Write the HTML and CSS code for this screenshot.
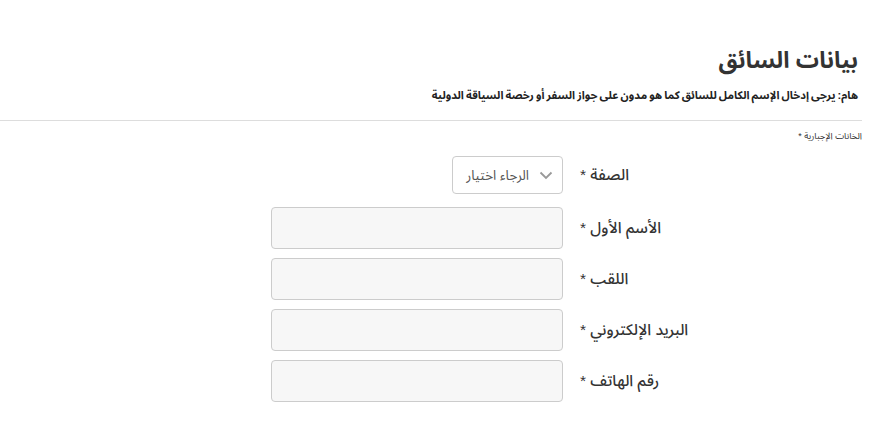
FILE: index.html
```html
<!DOCTYPE html>
<html lang="ar" dir="rtl">
<head>
<meta charset="utf-8">
<title>بيانات السائق</title>
<link rel="stylesheet" href="styles.css">
</head>
<body>
<div class="page">
  <div class="header">
    <h2 class="title">بيانات السائق</h2>
    <p class="subtitle">هام: يرجى إدخال الإسم الكامل للسائق كما هو مدون على جواز السفر أو رخصة السياقة الدولية</p>
  </div>
  <hr class="divider">
  <p class="required-note">الخانات الإجبارية *</p>
  <form class="form">
    <div class="row row-select">
      <label class="label">الصفة *</label>
      <div class="select">
        <svg class="chevron" width="14" height="9" viewBox="0 0 14 9"><path d="M1.5 1.5 L7 7 L12.5 1.5" fill="none" stroke="#999" stroke-width="1.8"/></svg>
        <span class="select-text">الرجاء اختيار</span>
      </div>
    </div>
    <div class="row">
      <label class="label">الأسم الأول *</label>
      <input class="input" type="text">
    </div>
    <div class="row">
      <label class="label">اللقب *</label>
      <input class="input" type="text">
    </div>
    <div class="row">
      <label class="label">البريد الإلكتروني *</label>
      <input class="input" type="text">
    </div>
    <div class="row">
      <label class="label">رقم الهاتف *</label>
      <input class="input" type="text">
    </div>
  </form>
</div>
</body>
</html>
```
FILE: styles.css
```css
html, body {
  margin: 0;
  padding: 0;
  background: #fff;
}
body {
  font-family: "Liberation Sans", "Noto Sans Arabic", sans-serif;
  color: #333;
}
.page {
  width: 862px;
  margin-right: 8px;
  padding-top: 1px;
}
.header {
  padding-right: 4px;
}
.title {
  margin: 44px 0 0 0;
  font-size: 23px;
  font-weight: bold;
  line-height: 30px;
  color: #333;
}
.subtitle {
  margin: 12px 0 0 0;
  font-size: 11.1px;
  word-spacing: -1px;
  font-weight: bold;
  line-height: 16px;
  color: #222;
}
.divider {
  border: 0;
  border-top: 1px solid #ddd;
  margin: 17px 0 0 0;
}
.required-note {
  margin: 9px 0 0 0;
  font-size: 9px;
  line-height: 12px;
  color: #333;
}
.form {
  margin-top: 14px;
  display: flex;
  flex-direction: column;
  gap: 9px;
}
.row {
  display: flex;
  align-items: center;
  gap: 17px;
}
.row-select {
  margin-bottom: 4px;
}
.label {
  width: 282px;
  text-align: left;
  font-size: 15.5px;
  font-weight: 500;
  color: #333;
}
.input {
  box-sizing: border-box;
  width: 292px;
  height: 42px;
  margin: 0;
  border: 1px solid #ccc;
  border-radius: 4px;
  background: #f7f7f7;
}
.select {
  box-sizing: border-box;
  width: 111px;
  height: 38px;
  border: 1px solid #ccc;
  border-radius: 4px;
  background: #fff;
  display: flex;
  align-items: center;
  padding: 0 9px 0 6px;
  gap: 10px;
}
.select-text {
  font-size: 13.5px;
  color: #555;
  white-space: nowrap;
}
```
